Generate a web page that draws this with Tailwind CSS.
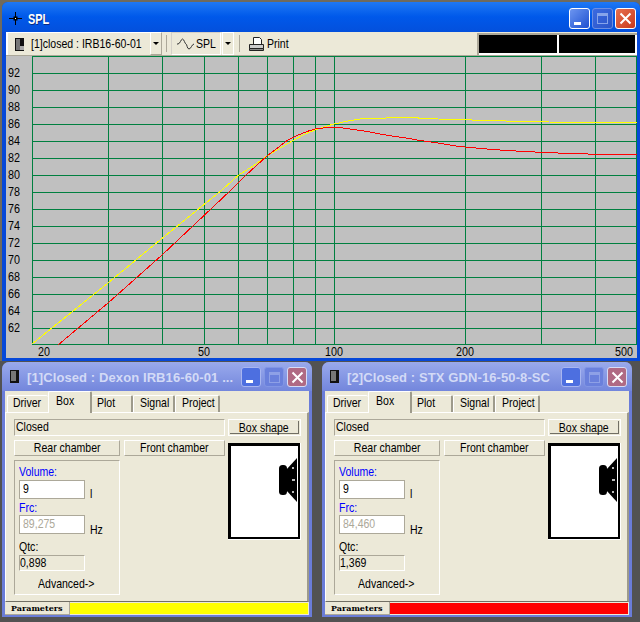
<!DOCTYPE html>
<html lang="en">
<head>
    <meta charset="UTF-8">
    <title>SPL</title>
    <script src="https://cdn.jsdelivr.net/npm/@tailwindcss/browser@4"></script>
</head>
<body class="w-[640px] h-[622px] overflow-hidden bg-[#525252] font-['Liberation_Sans',sans-serif] text-[13px] leading-[14px] text-black">

    <!-- SPL window -->
    <div class="w-[640px] h-[361px] pt-[2px] pl-[2px] bg-[#6f6a5e]">
        <div class="h-[359px] flex flex-col pl-[4px] pr-[3px] pb-[3px] rounded-t-[6px] bg-[#0648d8]">
            <div class="h-[30px] shrink-0 flex items-start -ml-[4px] -mr-[3px] pl-[7px] pr-[4px] rounded-t-[6px] bg-gradient-to-b from-[#1f78f4] via-[#0058ea] to-[#0350dc]">
                <svg width="13" height="13" viewBox="0 0 13 13" class="mt-[10px]"><path d="M6.5 0v13M0 6.5h13" stroke="#000" /><rect x="4.5" y="4.5" width="4" height="4" fill="#000" /><rect x="6" y="6" width="1" height="1" fill="#fff" /></svg>
                <span class="inline-block origin-left scale-x-[.78] ml-[6px] mt-[10px] text-white font-bold text-[14px] [text-shadow:1px_1px_0_#0a2a80]">SPL</span>
                <div class="ml-auto mt-[6px] flex gap-[2px]">
                    <div class="w-[21px] h-[21px] rounded-[3px] border border-white bg-gradient-to-br from-[#6d95f0] to-[#1f4fd0] flex items-end pl-[4px] pb-[3px]"><div class="w-[7px] h-[3px] bg-white"></div></div>
                    <div class="w-[21px] h-[21px] rounded-[3px] border border-[#6d8ee0] bg-gradient-to-br from-[#3c6ae0] to-[#2a55c8] flex items-center justify-center"><div class="w-[11px] h-[11px] border border-[#86a4ea] border-t-[3px]"></div></div>
                    <div class="w-[21px] h-[21px] rounded-[3px] border border-white bg-gradient-to-br from-[#e8704f] to-[#c8381a] flex items-center justify-center"><svg width="13" height="13" viewBox="0 0 13 13"><path d="M1.5 1.5l10 10M11.5 1.5l-10 10" stroke="#fff" stroke-width="2" /></svg></div>
                </div>
            </div>

            <!-- Toolbar -->
            <div class="h-[24px] shrink-0 flex items-stretch bg-[#ece9d8] border-b border-[#aca899]">
                <div class="w-[144px] shrink-0 flex items-center pl-[7px] border-l-2 border-t border-white">
                    <svg width="9" height="13" viewBox="0 0 9 13" class="shrink-0"><rect width="9" height="13" fill="#111" /><rect x="1" y="1" width="4" height="11" fill="#777" /><rect x="5" y="8" width="4" height="4" fill="#aaa" /></svg>
                    <span class="inline-block origin-left scale-x-[.81] ml-[7px] whitespace-nowrap">[1]closed : IRB16-60-01</span>
                </div>
                <div class="w-[12px] flex items-center justify-center border border-white border-r-[#aca899] border-b-[#aca899]"><div class="border-x-[3px] border-t-[3px] border-x-transparent border-t-black"></div></div>
                <div class="w-[1px] my-[3px] ml-[4px] bg-[#aca899]"></div>
                <div class="w-[50px] ml-[4px] flex items-center pl-[5px] border border-[#d4d0c8] border-r-white border-b-white">
                    <svg width="17" height="12" viewBox="0 0 17 12" class="shrink-0"><path d="M0 6H1C3 6 4 1 5.500 1S8 6 9 6s1 5 3 5 3-5 5-5" fill="none" stroke="#333" /></svg>
                    <span class="inline-block origin-left scale-x-[.81] ml-[2px]">SPL</span>
                </div>
                <div class="w-[12px] ml-[1px] flex items-center justify-center border border-white"><div class="border-x-[3px] border-t-[3px] border-x-transparent border-t-black"></div></div>
                <div class="w-[1px] my-[3px] ml-[5px] bg-[#aca899]"></div>
                <div class="ml-[8px] flex items-center">
                    <svg width="17" height="16" viewBox="0 0 17 16" class="shrink-0"><path d="M5.500 1.500h6l2 2v5h-8z" fill="#fff" stroke="#222" /><path d="M1.500 8.500h14v4h-14z" fill="#ccc" stroke="#222" /><path d="M1.500 12.500h14v2h-14z" fill="#888" stroke="#222" /></svg>
                    <span class="inline-block origin-left scale-x-[.81] ml-[2px]">Print</span>
                </div>
                <div class="ml-auto w-[160px] flex bg-white border-l-2 border-t-2 border-[#aca899] mt-[1px] pb-[2px] pr-[2px]">
                    <div class="w-[78px] bg-black"></div>
                    <div class="flex-1 ml-[2px] bg-black"></div>
                </div>
            </div>

            <!-- Chart -->
            <div class="flex-1 bg-[#c0c0c0] overflow-hidden">
                <svg width="631" height="302" viewBox="6 56 631 302" class="block" font-family="Liberation Sans" font-size="13" fill="#000">
                    <g shape-rendering="crispEdges" fill="none" stroke="#008040">
                        <path d="M32 56.500H637M32 73.500H637M32 90.500H637M32 107.500H637M32 124.500H637M32 141.500H637M32 158.500H637M32 175.500H637M32 192.500H637M32 209.500H637M32 226.500H637M32 243.500H637M32 260.500H637M32 277.500H637M32 294.500H637M32 311.500H637M32 328.500H637M32 344.500H637" />
                        <path d="M32.500 56V345M108.500 56V345M162.500 56V345M204.500 56V345M238.500 56V345M267.500 56V345M293.500 56V345M315.500 56V345M334.500 56V345M465.500 56V345M541.500 56V345M595.500 56V345M636.500 56V345" />
                        <polyline stroke="#ffff00" points="32,344 108,283 160,240 204,204.500 222,190 238,175.500 253,166 267,156 282,147 293,140.500 305,134 315,130 327,126 334,124 348,121 360,119 377,118.500 395,117.500 417,117.500 420,118.500 456,119.500 488,120.500 524,121.500 574,122.500 637,122.500" />
                        <polyline stroke="#ff0000" points="58,345 108,303 162,255 178,240 204,215.500 231,190 245,176 267,156 280,146 288,140 297,135.500 307,131.500 315,129 327,127.500 334,127 340,127.500 350,129 357,130 370,132 380,134 392,136 403,137.500 420,140.500 435,142.500 456,146 470,147.500 493,149.500 507,150.500 524,151.500 545,152.500 570,153.500 605,154.500 637,154.500" />
                    </g>
                    <g>
                        <text x="8" y="77" textLength="12" lengthAdjust="spacingAndGlyphs">92</text><text x="8" y="94" textLength="12" lengthAdjust="spacingAndGlyphs">90</text><text x="8" y="111" textLength="12" lengthAdjust="spacingAndGlyphs">88</text><text x="8" y="128" textLength="12" lengthAdjust="spacingAndGlyphs">86</text><text x="8" y="145" textLength="12" lengthAdjust="spacingAndGlyphs">84</text><text x="8" y="162" textLength="12" lengthAdjust="spacingAndGlyphs">82</text><text x="8" y="179" textLength="12" lengthAdjust="spacingAndGlyphs">80</text><text x="8" y="196" textLength="12" lengthAdjust="spacingAndGlyphs">78</text><text x="8" y="213" textLength="12" lengthAdjust="spacingAndGlyphs">76</text><text x="8" y="230" textLength="12" lengthAdjust="spacingAndGlyphs">74</text><text x="8" y="247" textLength="12" lengthAdjust="spacingAndGlyphs">72</text><text x="8" y="264" textLength="12" lengthAdjust="spacingAndGlyphs">70</text><text x="8" y="281" textLength="12" lengthAdjust="spacingAndGlyphs">68</text><text x="8" y="298" textLength="12" lengthAdjust="spacingAndGlyphs">66</text><text x="8" y="315" textLength="12" lengthAdjust="spacingAndGlyphs">64</text><text x="8" y="332" textLength="12" lengthAdjust="spacingAndGlyphs">62</text>
                        <text x="38" y="356" textLength="12" lengthAdjust="spacingAndGlyphs">20</text><text x="198" y="356" textLength="12" lengthAdjust="spacingAndGlyphs">50</text><text x="325" y="356" textLength="18" lengthAdjust="spacingAndGlyphs">100</text><text x="456" y="356" textLength="18" lengthAdjust="spacingAndGlyphs">200</text><text x="615" y="356" textLength="18" lengthAdjust="spacingAndGlyphs">500</text>
                    </g>
                </svg>
            </div>
        </div>
    </div>

    <div id="boxWindows" class="flex gap-[10px] pl-[2px] pt-[1px]"></div>

    <script>
        // Same box dialog twice, only the driver data differs
        const boxes = [
            { title: "[1]Closed : Dexon IRB16-60-01 ...", frc: "89,275", qtc: "0,898", status: "bg-[#ffff00]" },
            { title: "[2]Closed : STX GDN-16-50-8-SC", frc: "84,460", qtc: "1,369", status: "bg-[#ff0000]" }
        ];

        const label = (text, extra = "") => `<span class="inline-block origin-left scale-x-[.81] whitespace-nowrap ${extra}">${text}</span>`;
        const centered = text => `<span class="inline-block scale-x-[.81] whitespace-nowrap">${text}</span>`;

        function boxWindow(box) {
            return `
            <div class="w-[310px] h-[255px] flex flex-col px-[3px] pb-[2px] rounded-t-[7px] bg-[#6a7cd8]">
                <div class="h-[29px] shrink-0 flex items-start -mx-[3px] pl-[8px] pr-[5px] rounded-t-[7px] bg-gradient-to-b from-[#9aaaec] to-[#7386dc]">
                    <svg width="9" height="13" viewBox="0 0 9 13" class="mt-[8px] shrink-0"><rect width="9" height="13" fill="#111" /><rect x="1" y="1" width="5" height="10" fill="#777" /></svg>
                    <span class="ml-[8px] mt-[9px] text-[#d3daf6] font-bold text-[13px] tracking-[0.1px] whitespace-nowrap">${box.title}</span>
                    <div class="ml-auto mt-[5px] flex gap-[3px]">
                        <div class="w-[20px] h-[20px] rounded-[3px] border border-[#a8b6f0] bg-[#4d6fe0] flex items-end pl-[4px] pb-[3px]"><div class="w-[7px] h-[3px] bg-white"></div></div>
                        <div class="w-[20px] h-[20px] rounded-[3px] border border-[#8296e4] bg-[#6a80dc] flex items-center justify-center"><div class="w-[11px] h-[11px] border border-[#8ea0e6] border-t-[3px]"></div></div>
                        <div class="w-[20px] h-[20px] rounded-[3px] border border-[#d6dcf6] bg-[#b06a84] flex items-center justify-center"><svg width="13" height="13" viewBox="0 0 13 13"><path d="M1.5 1.5l10 10M11.5 1.5l-10 10" stroke="#fff" stroke-width="2" /></svg></div>
                    </div>
                </div>
                <div class="flex-1 flex flex-col bg-[#ece9d8]">
                    <div class="h-[21px] shrink-0 flex items-end pl-[2px]">
                        <div class="w-[41px] h-[17px] pl-[5px] border-l border-t border-white rounded-t-[2px]">${label("Driver")}</div>
                        <div class="relative z-10 w-[44px] h-[22px] -mb-[1px] pl-[7px] pt-[2px] bg-[#ece9d8] border-l border-t border-white border-r-2 border-r-[#9d9a8b] rounded-t-[2px]">${label("Box")}</div>
                        <div class="w-[41px] h-[17px] pl-[5px] border-t border-white border-r-2 border-r-[#9d9a8b] rounded-t-[2px]">${label("Plot")}</div>
                        <div class="w-[42px] h-[17px] pl-[6px] border-l border-t border-white border-r-2 border-r-[#9d9a8b] rounded-t-[2px]">${label("Signal")}</div>
                        <div class="w-[45px] h-[17px] pl-[6px] border-l border-t border-white border-r-2 border-r-[#9d9a8b] rounded-t-[2px]">${label("Project")}</div>
                    </div>
                    <div class="h-[190px] shrink-0 flex gap-[3px] pl-[8px] pt-[6px] border border-white border-r-2 border-r-[#9d9a8b] border-b-[#716f64]">
                        <div class="w-[211px] shrink-0">
                            <div class="h-[17px] pl-[1px] border border-[#aca899] border-r-white border-b-white">${label("Closed")}</div>
                            <div class="flex gap-[4px] mt-[4px]">
                                <div class="w-[106px] h-[16px] border border-white border-r-[#aca899] border-b-[#aca899] text-center">${centered("Rear chamber")}</div>
                                <div class="w-[101px] h-[16px] border border-white border-r-[#aca899] border-b-[#aca899] text-center">${centered("Front chamber")}</div>
                            </div>
                            <div class="w-[106px] h-[135px] mt-[4px] border border-[#aca899] border-r-white border-b-white pl-[4px] pt-[4px]">
                                <div class="h-[14px] text-[#0000ff]">${label("Volume:")}</div>
                                <div class="h-[19px] flex mt-[1px]">
                                    <div class="w-[66px] h-[19px] pl-[3px] pt-[1px] bg-white border border-[#aca899]">${label("9")}</div>
                                    ${label("l", "ml-[5px] mt-[7px]")}
                                </div>
                                <div class="h-[14px] text-[#0000ff] mt-[2px]">${label("Frc:")}</div>
                                <div class="h-[19px] flex">
                                    <div class="w-[66px] h-[19px] pl-[3px] pt-[1px] bg-white border border-[#aca899] text-[#aca899]">${label(box.frc)}</div>
                                    ${label("Hz", "ml-[5px] mt-[8px]")}
                                </div>
                                <div class="h-[14px] mt-[6px]">${label("Qtc:")}</div>
                                <div class="w-[66px] h-[16px] mt-[1px] border border-[#aca899] border-r-white border-b-white">${label(box.qtc)}</div>
                                <div class="h-[14px] mt-[6px] ml-[19px]">${label("Advanced-&gt;")}</div>
                            </div>
                        </div>
                        <div class="w-[73px] shrink-0">
                            <div class="h-[17px] p-[1px] border border-white"><div class="h-[13px] leading-[13px] border-r border-b border-[#716f64] text-center">${centered("Box shape")}</div></div>
                            <div class="w-[73px] h-[97px] mt-[7px] border-r border-b border-white">
                                <div class="w-[72px] h-[96px] bg-white border-black border-l-[3px] border-t-[3px] border-r-2 border-b-2">
                                    <svg width="67" height="91" viewBox="0 0 67 91" class="block"><rect x="48" y="19" width="8" height="30" rx="3.500" fill="#000" /><path d="M55 24L66 12V56L55 44z" fill="#000" /><rect x="61" y="21" width="2" height="2" fill="#bbb" /><rect x="61" y="33" width="3" height="2" fill="#bbb" /><rect x="61" y="45" width="2" height="2" fill="#bbb" /></svg>
                                </div>
                            </div>
                        </div>
                    </div>
                    <div class="h-[13px] shrink-0 flex">
                        <div class="w-[65px] pl-[6px] font-['DejaVu_Serif',serif] font-bold text-[8px] leading-[13px] border-b border-[#aca899] border-r">Parameters</div>
                        <div class="flex-1 ${box.status} mr-[1px] my-[1px]"></div>
                    </div>
                </div>
            </div>`;
        }

        document.getElementById("boxWindows").innerHTML = boxes.map(boxWindow).join("");
    </script>
</body>
</html>
